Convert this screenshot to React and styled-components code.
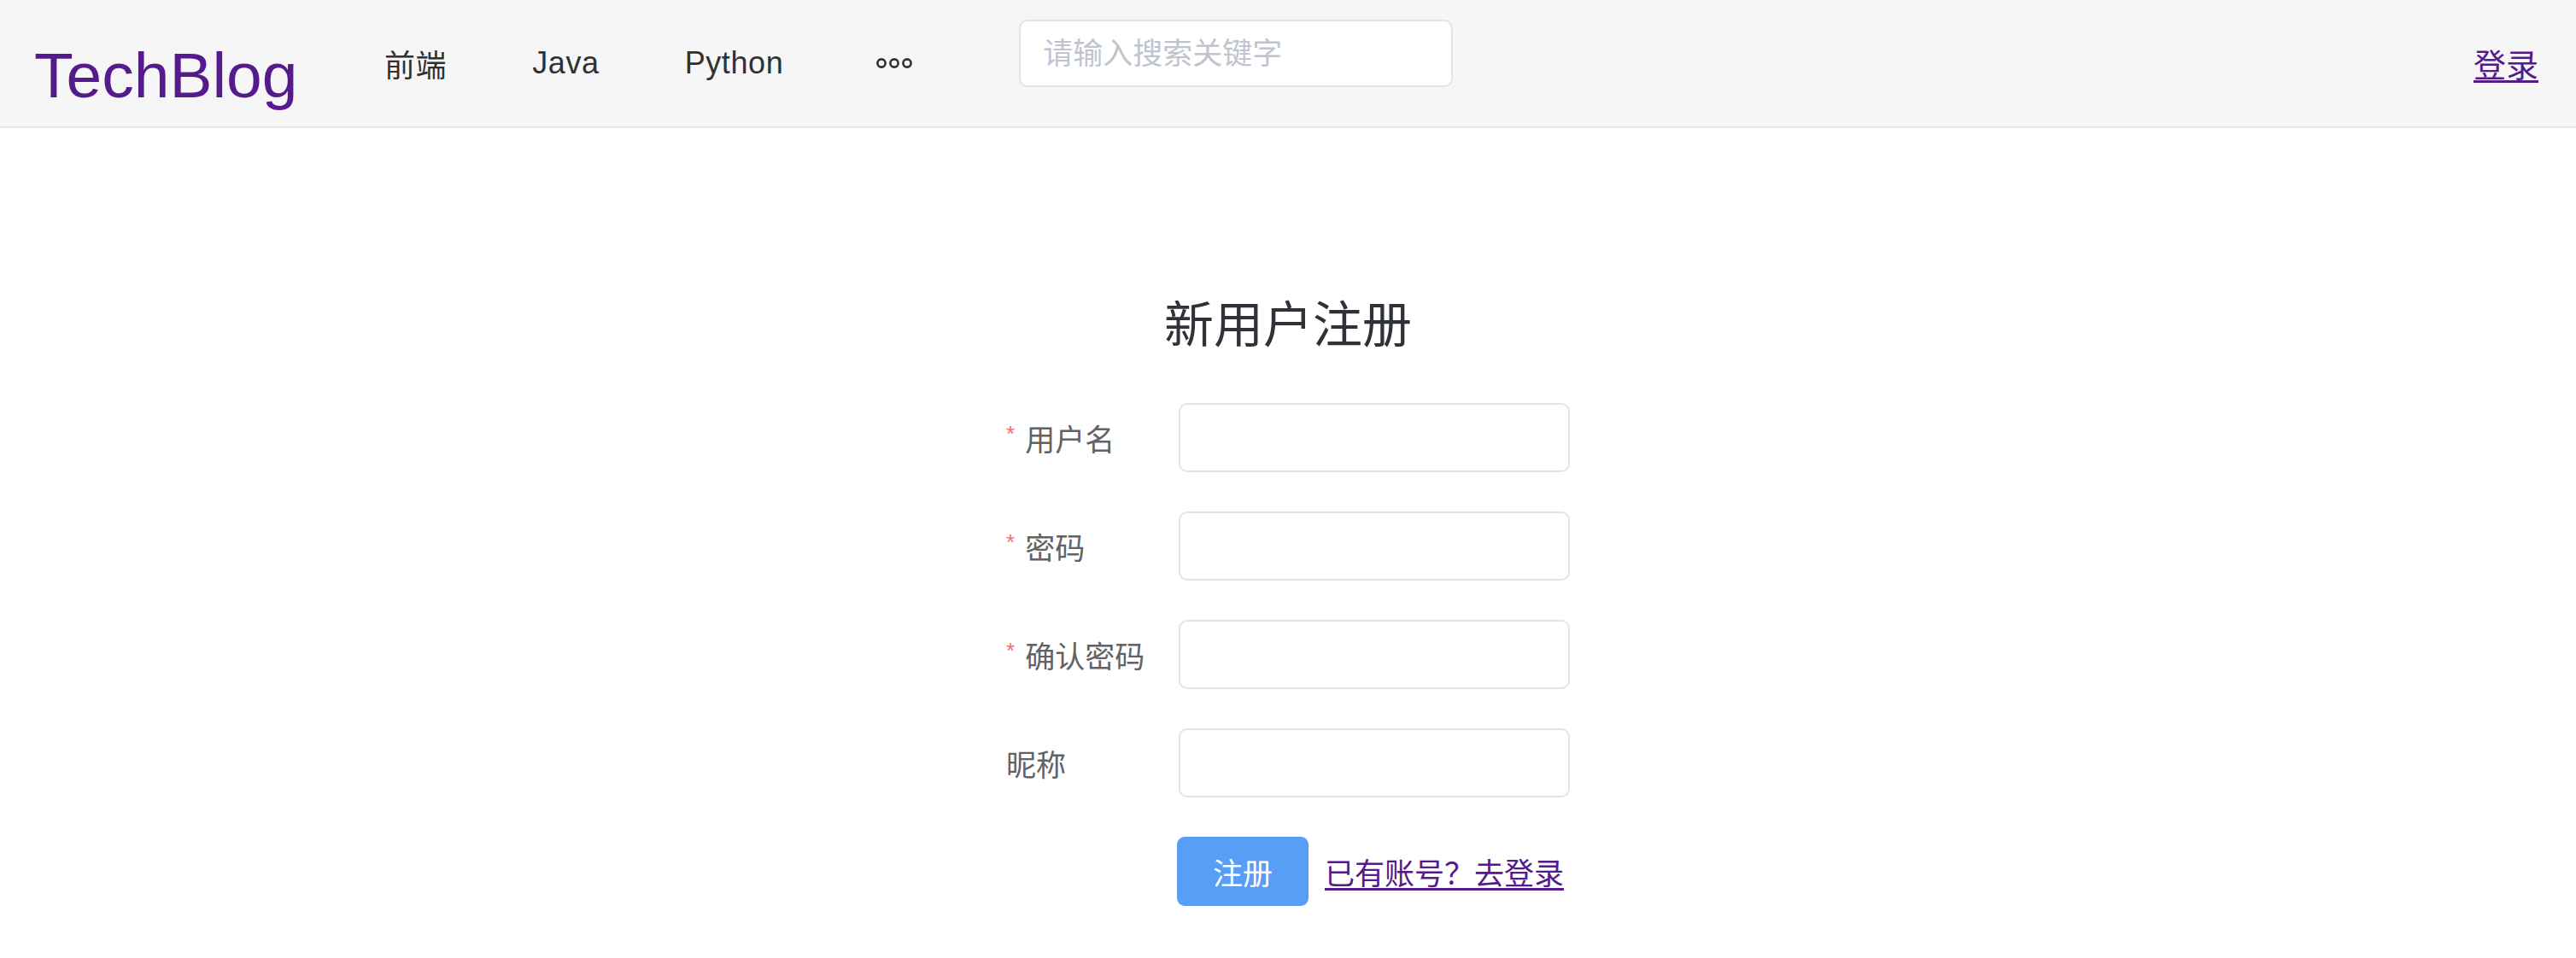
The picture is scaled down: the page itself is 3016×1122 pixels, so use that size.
import React from "react";
import styled, { createGlobalStyle } from "styled-components";

const Global = createGlobalStyle`
  html, body { margin: 0; padding: 0; background: #ffffff; }
  body { font-family: "Liberation Sans", "Noto Sans CJK SC", sans-serif; }
  * { box-sizing: border-box; }
`;

const Header = styled.header`
  display: flex;
  align-items: flex-start;
  height: 150px;
  background: #f6f6f6;
  border-bottom: 2px solid #e6e6e6;
  padding: 0 44px 0 40px;
`;

const Logo = styled.a`
  font-family: "Liberation Sans", sans-serif;
  font-size: 75px;
  line-height: 148px;
  padding-top: 14px;
  color: #551a8b;
  text-decoration: none;
  width: 360px;
  flex: none;
`;

const Nav = styled.nav`
  display: flex;
  align-items: center;
  height: 148px;
`;

const NavItem = styled.a`
  display: flex;
  align-items: center;
  height: 148px;
  padding: 0 ${(p) => (p.$icon ? "50px 0 58px" : "50px")};
  font-size: 36px;
  letter-spacing: 0.6px;
  color: #303133;
  text-decoration: none;
  font-family: "Liberation Sans", "Noto Sans CJK SC", sans-serif;
`;

const Search = styled.input`
  margin: 23px 0 0 74px;
  width: 508px;
  height: 79px;
  border: 2px solid #e2e4e8;
  border-radius: 10px;
  background: #ffffff;
  padding: 0 26px;
  font-size: 35px;
  font-family: "Liberation Sans", "Noto Sans CJK SC", sans-serif;
  color: #606266;
  outline: none;
  &::placeholder { color: #c0c4cc; }
`;

const Spacer = styled.div`
  flex: 1;
`;

const LoginLink = styled.a`
  font-size: 38px;
  line-height: 148px;
  color: #551a8b;
  text-decoration: underline;
  text-underline-offset: 4px;
  font-family: "Noto Sans CJK SC", sans-serif;
`;

const Main = styled.main`
  display: flex;
  flex-direction: column;
  align-items: center;
  padding-top: 186px;
`;

const Title = styled.h2`
  margin: 0 0 56px;
  font-size: 58px;
  line-height: 80px;
  font-weight: 400;
  color: #2f3238;
  font-family: "Noto Sans CJK SC", sans-serif;
`;

const Form = styled.form`
  width: 660px;
  display: flex;
  flex-direction: column;
`;

const Row = styled.div`
  display: flex;
  align-items: center;
  height: 81px;
  margin-bottom: 46px;
`;

const Label = styled.label`
  width: 202px;
  flex: none;
  font-size: 35px;
  color: #606266;
  font-family: "Noto Sans CJK SC", sans-serif;
  display: flex;
  align-items: center;
`;

const Star = styled.span`
  color: #f56c6c;
  font-size: 26px;
  margin-right: 12px;
  font-family: "Liberation Sans", sans-serif;
  position: relative;
  top: -4px;
`;

const Field = styled.input`
  width: 458px;
  height: 81px;
  border: 2px solid #e2e4e8;
  border-radius: 10px;
  background: #ffffff;
  padding: 0 26px;
  font-size: 35px;
  outline: none;
`;

const Actions = styled.div`
  display: flex;
  align-items: center;
  padding-left: 200px;
  gap: 19px;
`;

const Button = styled.button`
  width: 154px;
  height: 81px;
  border: none;
  border-radius: 9px;
  background: #589df6;
  color: #ffffff;
  font-size: 35px;
  font-family: "Noto Sans CJK SC", sans-serif;
  cursor: pointer;
`;

const BackLink = styled.a`
  font-size: 35px;
  color: #551a8b;
  text-decoration: underline;
  text-underline-offset: 4px;
  font-family: "Noto Sans CJK SC", sans-serif;
`;

const MoreIcon = () => (
  <svg width="44" height="14" viewBox="0 0 44 14" fill="none" stroke="#303133" strokeWidth="2.6">
    <circle cx="7" cy="7" r="4.6" />
    <circle cx="22" cy="7" r="4.6" />
    <circle cx="37" cy="7" r="4.6" />
  </svg>
);

const fields = [
  { label: "用户名", required: true, type: "text" },
  { label: "密码", required: true, type: "password" },
  { label: "确认密码", required: true, type: "password" },
  { label: "昵称", required: false, type: "text" },
];

export default function App() {
  return (
    <>
      <Global />
      <Header>
        <Logo href="#">TechBlog</Logo>
        <Nav>
          <NavItem href="#">前端</NavItem>
          <NavItem href="#">Java</NavItem>
          <NavItem href="#">Python</NavItem>
          <NavItem href="#" $icon><MoreIcon /></NavItem>
        </Nav>
        <Search placeholder="请输入搜索关键字" />
        <Spacer />
        <LoginLink href="#">登录</LoginLink>
      </Header>
      <Main>
        <Title>新用户注册</Title>
        <Form onSubmit={(e) => e.preventDefault()}>
          {fields.map((f) => (
            <Row key={f.label}>
              <Label>
                {f.required && <Star>*</Star>}
                {f.label}
              </Label>
              <Field type={f.type} />
            </Row>
          ))}
          <Actions>
            <Button type="submit">注册</Button>
            <BackLink href="#">已有账号？去登录</BackLink>
          </Actions>
        </Form>
      </Main>
    </>
  );
}
